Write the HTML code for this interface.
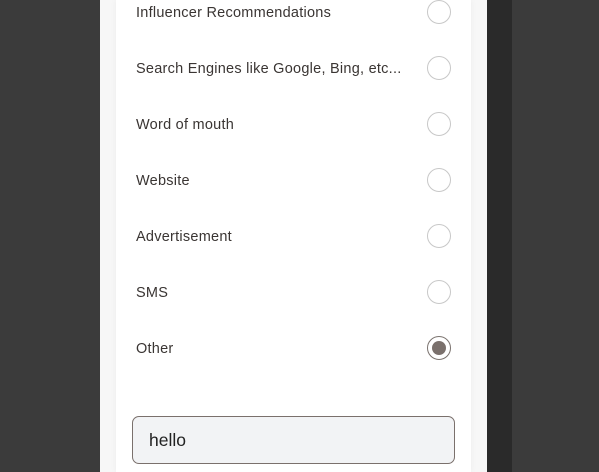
<!DOCTYPE html>
<html><head><style>
body{margin:0;width:599px;height:472px;overflow:hidden;background:#3b3b3b;font-family:"Liberation Sans",sans-serif;position:relative}
.pg{position:absolute;left:100px;top:0;width:387px;height:472px;background:#f7f7f7}
.strip{position:absolute;left:487px;top:0;width:25px;height:472px;background:#2a2a2a}
.card{position:absolute;left:116px;top:0;width:355px;height:472px;background:#fff;box-shadow:0 0 6px rgba(0,0,0,.05)}
.row{position:absolute;left:136px;font-size:14.5px;letter-spacing:0.25px;color:#3a3533;transform:translateY(-50%);margin-top:1px}
.r{position:absolute;left:427px;width:22px;height:22px;border:1px solid #c8c8c8;border-radius:50%;transform:translateY(-50%);background:#fff}
.r.on{border-color:#7a726e}
.r.on:after{content:"";position:absolute;left:4px;top:4px;width:14px;height:14px;border-radius:50%;background:#7a706c}
.inp{position:absolute;left:132px;top:416px;width:321px;height:46px;border:1px solid #7a706c;border-radius:7px;background:#f2f3f5;box-sizing:content-box}
.inp span{position:absolute;left:16px;top:13px;font-size:17.5px;color:#222}
</style></head><body>
<div class="pg"></div><div class="strip"></div><div class="card"></div>
<div class="row" style="top:12px">Influencer Recommendations</div><div class="r" style="top:12px"></div>
<div class="row" style="top:68px">Search Engines like Google, Bing, etc...</div><div class="r" style="top:68px"></div>
<div class="row" style="top:124px">Word of mouth</div><div class="r" style="top:124px"></div>
<div class="row" style="top:180px">Website</div><div class="r" style="top:180px"></div>
<div class="row" style="top:236px">Advertisement</div><div class="r" style="top:236px"></div>
<div class="row" style="top:292px">SMS</div><div class="r" style="top:292px"></div>
<div class="row" style="top:348px">Other</div><div class="r on" style="top:348px"></div>
<div class="inp"><span>hello</span></div>
</body></html>
